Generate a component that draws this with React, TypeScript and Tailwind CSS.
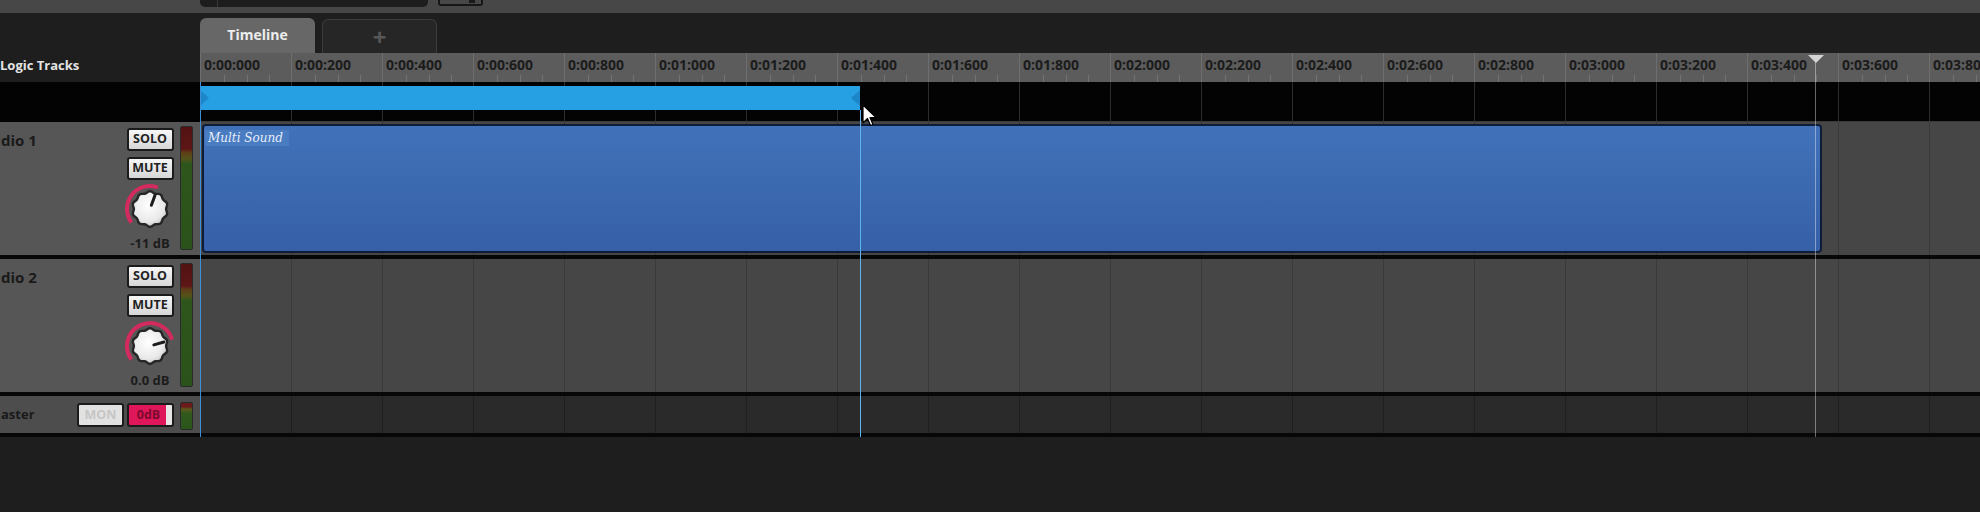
import React from "react";

const CELLS = Array.from({ length: 20 }, (_, i) => i);

function fmt(i: number) {
  const t = i * 200;
  const s = Math.floor(t / 1000);
  const ms = t % 1000;
  return `0:0${s}:${String(ms).padStart(3, "0")}`;
}

function GridLines({ line }: { line: string }) {
  return (
    <div className="absolute inset-0 flex overflow-hidden">
      {CELLS.map((i) => (
        <div key={i} className={`w-[91px] shrink-0 h-full border-l ${line}`} />
      ))}
    </div>
  );
}

function Knob({ angle, id }: { angle: number; id: string }) {
  const cx = 26;
  const cy = 26;
  const pt = (deg: number, r: number) => [
    cx + r * Math.sin((deg * Math.PI) / 180),
    cy - r * Math.cos((deg * Math.PI) / 180),
  ];
  const start = -126;
  const [sx, sy] = pt(start, 23);
  const [ex, ey] = pt(angle, 23);
  const large = angle - start > 180 ? 1 : 0;
  const body: string[] = [];
  for (let i = 0; i < 72; i++) {
    const th = (i * 5 * Math.PI) / 180;
    const r = 17 + 0.9 * Math.cos(10 * th);
    body.push(`${(cx + r * Math.sin(th)).toFixed(2)},${(cy - r * Math.cos(th)).toFixed(2)}`);
  }
  const [px, py] = pt(angle, 14.5);
  const [qx, qy] = pt(angle, 4);
  return (
    <svg width="52" height="52" viewBox="0 0 52 52" className="block">
      <defs>
        <radialGradient id={id} cx="45%" cy="40%" r="65%">
          <stop offset="0%" stopColor="#ffffff" />
          <stop offset="70%" stopColor="#e9e9e9" />
          <stop offset="100%" stopColor="#bdbdbd" />
        </radialGradient>
      </defs>
      <path
        d={`M ${sx} ${sy} A 23 23 0 ${large} 1 ${ex} ${ey}`}
        fill="none"
        stroke="#d42a5e"
        strokeWidth="4"
      />
      <polygon points={body.join(" ")} fill={`url(#${id})`} stroke="#262626" strokeWidth="2.4" />
      <line x1={qx} y1={qy} x2={px} y2={py} stroke="#1c1c1c" strokeWidth="3" strokeLinecap="round" />
    </svg>
  );
}

function Btn({ children }: { children: React.ReactNode }) {
  return (
    <div className="w-[47px] h-[23px] rounded-[3px] border-2 border-[#1b1b1b] bg-linear-to-b from-[#f7f7f7] to-[#d6d6d6] flex items-center justify-center text-[12.5px] font-bold leading-none text-[#222]">
      {children}
    </div>
  );
}

function Meter() {
  return (
    <div className="ml-[4px] mt-[4px] w-[13px] h-[124px] rounded-[2px] border border-[#2a2a2a] bg-[linear-gradient(to_bottom,#521212_0%,#5e1616_18%,#5e3f16_21%,#545219_26%,#2e561c_30%,#2a521a_100%)]" />
  );
}

function TrackHeader({ name, db, angle, id }: { name: string; db: string; angle: number; id: string }) {
  return (
    <div className="w-[200px] shrink-0 h-full bg-[#565656] flex overflow-hidden">
      <div className="flex-1 min-w-0 pt-[9px] pl-[1px]">
        <div className="whitespace-nowrap text-[15px] font-bold leading-[18px] text-[#1a1a1a]">{name}</div>
      </div>
      <div className="w-[52px] shrink-0 flex flex-col items-center pt-[6px]">
        <Btn>SOLO</Btn>
        <div className="h-[6px]" />
        <Btn>MUTE</Btn>
        <div className="mt-[3px]">
          <Knob angle={angle} id={id} />
        </div>
        <div className="mt-[1px] text-[13px] font-bold leading-[15px] text-[#1c1c1c] whitespace-nowrap">{db}</div>
      </div>
      <Meter />
      <div className="w-[7px] shrink-0" />
    </div>
  );
}

export default function App() {
  return (
    <div className="relative w-[1980px] h-[512px] overflow-hidden bg-[#1e1e1e] font-['Open_Sans',sans-serif] select-none">
      {/* top bar */}
      <div className="h-[13px] bg-[#474747] flex pl-[200px]">
        <div className="w-[228px] h-[7px] rounded-b-[5px] bg-[#1d1d1d] flex">
          <div className="ml-[17px] w-px h-full bg-[#3a3a3a]" />
        </div>
        <div className="ml-[10px] w-[45px] h-[6px] rounded-b-[3px] border-2 border-t-0 border-[#161616] flex justify-end pr-[6px]">
          <div className="w-[6px] h-[3px] bg-[#1a1a1a]" />
        </div>
      </div>

      {/* tabs */}
      <div className="h-[40px] flex pl-[200px]">
        <div className="mt-[5px] w-[115px] h-[35px] rounded-t-[6px] bg-[#676767] flex items-center justify-center text-[14px] font-bold text-[#ededed] pb-[2px]">
          Timeline
        </div>
        <div className="mt-[6px] ml-[7px] w-[115px] h-[34px] rounded-t-[6px] border border-b-0 border-[#3c3c3c] bg-[#262626] flex items-center justify-center text-[24px] font-bold leading-none text-[#575757]">
          +
        </div>
      </div>

      {/* ruler row */}
      <div className="h-[29px] flex">
        <div className="w-[200px] shrink-0 flex items-center overflow-hidden pb-[4px]">
          <span className="text-[13px] font-bold text-[#e4e4e4] whitespace-nowrap">Logic Tracks</span>
        </div>
        <div className="flex-1 bg-[#5c5c5c] flex overflow-hidden">
          {CELLS.map((i) => (
            <div key={i} className="relative w-[91px] shrink-0 h-full border-l border-[#6e6e6e]">
              <div className="pl-[3px] pt-[3px] text-[14px] font-bold leading-[18px] text-[#1b1b1b] whitespace-nowrap">
                {fmt(i)}
              </div>
              <div className="absolute left-0 right-0 bottom-0 h-[7px] flex">
                <div className="w-[23px] h-full" />
                <div className="w-[23px] h-full border-l border-[#737373]" />
                <div className="w-[22px] h-full border-l border-[#737373]" />
                <div className="w-[22px] h-full border-l border-[#737373]" />
              </div>
            </div>
          ))}
        </div>
      </div>

      {/* loop row */}
      <div className="h-[40px] flex bg-[#030303]">
        <div className="w-[200px] shrink-0" />
        <div className="relative flex-1 border-b border-[#3a3a3a]">
          <GridLines line="border-[#2c2c2c]" />
          <div className="relative mt-[4px] w-[660px] h-[24px] bg-[#27a0e3] flex items-center justify-between">
            <div className="w-0 h-0 border-y-[8px] border-y-transparent border-l-[9px] border-l-[#1c86c9]" />
            <div className="w-0 h-0 border-y-[8px] border-y-transparent border-r-[9px] border-r-[#1c86c9]" />
          </div>
        </div>
      </div>

      {/* audio 1 */}
      <div className="h-[133px] flex">
        <TrackHeader name="dio 1" db="-11 dB" angle={20} id="k1" />
        <div className="relative flex-1 bg-[#464646] pt-[2px] pl-[2px]">
          <GridLines line="border-[#393939]" />
          <div className="relative w-[1620px] h-[129px] rounded-[4px] border-2 border-[#0f1c38] bg-linear-to-b from-[#4172b9] to-[#3660a7]">
            <div className="absolute left-[1px] top-[4px] h-[16px] w-[84px] bg-[#4a7cc2] pl-[3px] font-['DejaVu_Serif',serif] italic text-[12px] leading-[16px] text-[#e8eef8] whitespace-nowrap">
              Multi Sound
            </div>
          </div>
        </div>
      </div>
      <div className="h-[4px] bg-[#070707]" />

      {/* audio 2 */}
      <div className="h-[133px] flex">
        <TrackHeader name="dio 2" db="0.0 dB" angle={74} id="k2" />
        <div className="relative flex-1 bg-[#464646]">
          <GridLines line="border-[#393939]" />
        </div>
      </div>
      <div className="h-[4px] bg-[#070707]" />

      {/* master */}
      <div className="h-[37px] flex">
        <div className="w-[200px] shrink-0 h-full bg-[#4d4d4d] flex overflow-hidden">
          <div className="flex-1 min-w-0 flex items-center pl-[1px]">
            <div className="whitespace-nowrap text-[13px] font-bold text-[#1a1a1a]">aster</div>
          </div>
          <div className="mt-[7px] w-[47px] h-[24px] rounded-[3px] border-2 border-[#1b1b1b] bg-[#e2e2e2] flex items-center justify-center text-[12.5px] font-bold text-[#c6c6c6]">
            MON
          </div>
          <div className="ml-[3px] mt-[7px] w-[47px] h-[24px] rounded-[3px] border-2 border-[#1b1b1b] bg-[#df175a] flex overflow-hidden">
            <div className="flex-1 flex items-center justify-center text-[12.5px] font-bold text-[#7c0a2c] pl-[2px]">0dB</div>
            <div className="w-[6px] h-full bg-[#e6e6e6]" />
          </div>
          <div className="ml-[6px] mt-[6px] w-[13px] h-[28px] rounded-[2px] border border-[#2a2a2a] bg-[linear-gradient(to_bottom,#6a1a1a_0%,#6a1a1a_14%,#5e5a1e_24%,#30591d_40%,#2b551b_100%)]" />
          <div className="w-[7px] shrink-0" />
        </div>
        <div className="relative flex-1 bg-[#2a2a2a]">
          <GridLines line="border-[#1f1f1f]" />
        </div>
      </div>
      <div className="h-[4px] bg-[#070707]" />

      {/* overlays: playhead / loop lines / cursor */}
      <div className="absolute left-[200px] top-[82px] w-px h-[355px] bg-[#3d8fd6]" />
      <div className="absolute left-[860px] top-[110px] w-px h-[327px] bg-[#5eb2f0]" />
      <div className="absolute left-[1815px] top-[55px] w-px h-[382px] bg-white/40" />
      <div className="absolute left-[1808px] top-[55px] w-0 h-0 border-x-[8px] border-x-transparent border-t-[8px] border-t-[#d4d4d4]" />
      <svg className="absolute left-[862px] top-[104px]" width="16" height="24" viewBox="0 0 16 24">
        <path d="M1 1 L1 19 L5.5 14.5 L8.5 21.5 L11 20.5 L8 13.5 L14 13.5 Z" fill="#ffffff" stroke="#000000" strokeWidth="1.2" strokeLinejoin="round" />
      </svg>
    </div>
  );
}
